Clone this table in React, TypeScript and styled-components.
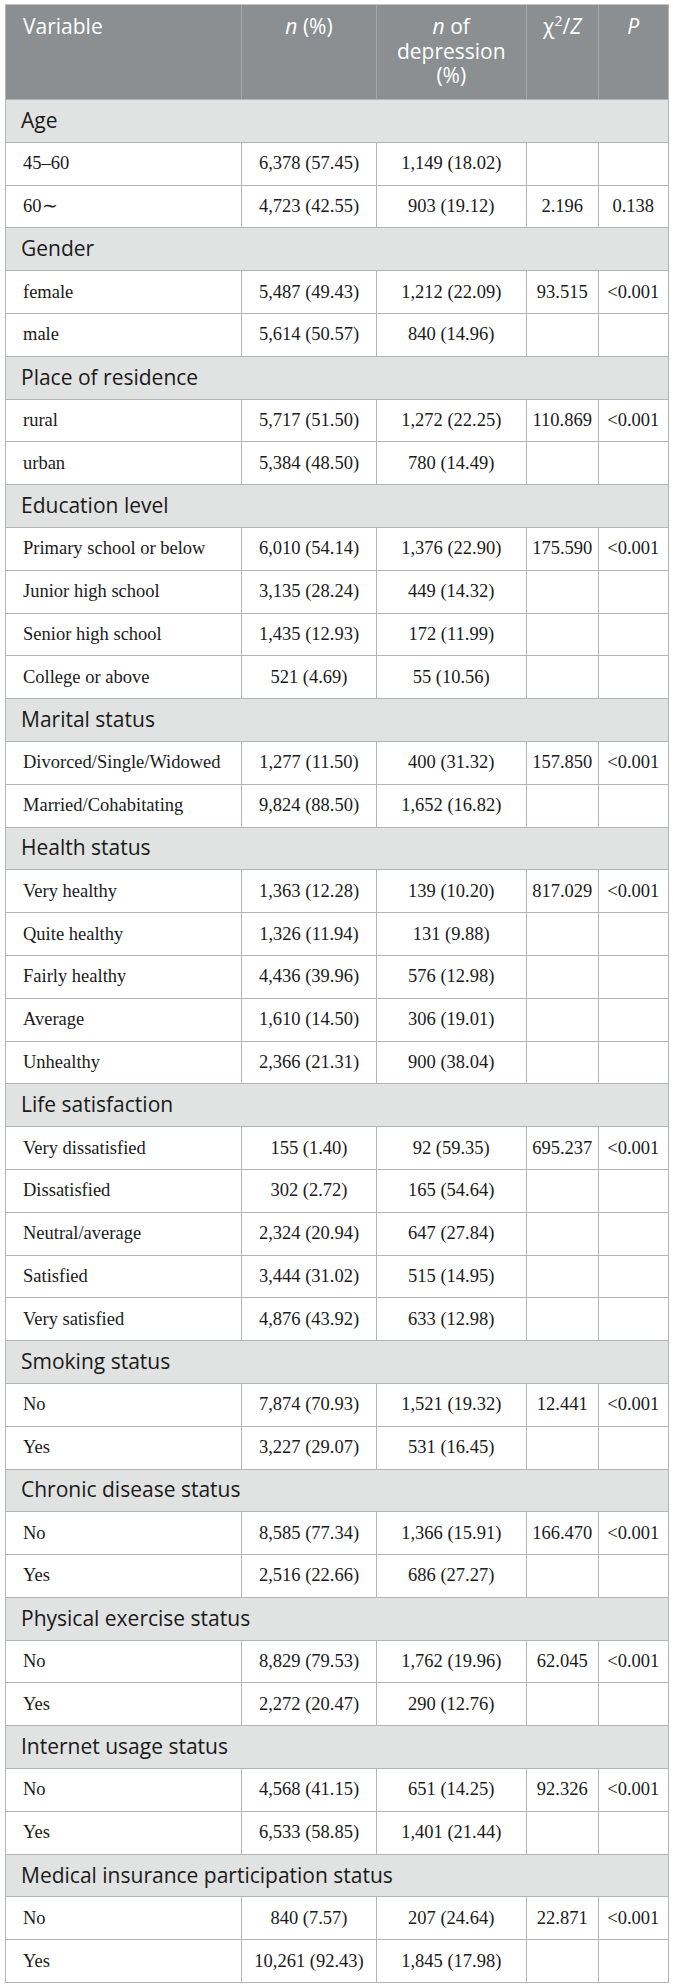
import React from "react";
import styled, { createGlobalStyle } from "styled-components";

const Global = createGlobalStyle`
  html, body { margin: 0; padding: 0; background: #ffffff; }
  body { padding: 4px 5px; }
`;

type Row = [string, string, string, string, string];
type Section = { title: string; rows: Row[] };

const sections: Section[] = [
  { title: "Age", rows: [
    ["45–60", "6,378 (57.45)", "1,149 (18.02)", "", ""],
    ["60∼", "4,723 (42.55)", "903 (19.12)", "2.196", "0.138"],
  ] },
  { title: "Gender", rows: [
    ["female", "5,487 (49.43)", "1,212 (22.09)", "93.515", "<0.001"],
    ["male", "5,614 (50.57)", "840 (14.96)", "", ""],
  ] },
  { title: "Place of residence", rows: [
    ["rural", "5,717 (51.50)", "1,272 (22.25)", "110.869", "<0.001"],
    ["urban", "5,384 (48.50)", "780 (14.49)", "", ""],
  ] },
  { title: "Education level", rows: [
    ["Primary school or below", "6,010 (54.14)", "1,376 (22.90)", "175.590", "<0.001"],
    ["Junior high school", "3,135 (28.24)", "449 (14.32)", "", ""],
    ["Senior high school", "1,435 (12.93)", "172 (11.99)", "", ""],
    ["College or above", "521 (4.69)", "55 (10.56)", "", ""],
  ] },
  { title: "Marital status", rows: [
    ["Divorced/Single/Widowed", "1,277 (11.50)", "400 (31.32)", "157.850", "<0.001"],
    ["Married/Cohabitating", "9,824 (88.50)", "1,652 (16.82)", "", ""],
  ] },
  { title: "Health status", rows: [
    ["Very healthy", "1,363 (12.28)", "139 (10.20)", "817.029", "<0.001"],
    ["Quite healthy", "1,326 (11.94)", "131 (9.88)", "", ""],
    ["Fairly healthy", "4,436 (39.96)", "576 (12.98)", "", ""],
    ["Average", "1,610 (14.50)", "306 (19.01)", "", ""],
    ["Unhealthy", "2,366 (21.31)", "900 (38.04)", "", ""],
  ] },
  { title: "Life satisfaction", rows: [
    ["Very dissatisfied", "155 (1.40)", "92 (59.35)", "695.237", "<0.001"],
    ["Dissatisfied", "302 (2.72)", "165 (54.64)", "", ""],
    ["Neutral/average", "2,324 (20.94)", "647 (27.84)", "", ""],
    ["Satisfied", "3,444 (31.02)", "515 (14.95)", "", ""],
    ["Very satisfied", "4,876 (43.92)", "633 (12.98)", "", ""],
  ] },
  { title: "Smoking status", rows: [
    ["No", "7,874 (70.93)", "1,521 (19.32)", "12.441", "<0.001"],
    ["Yes", "3,227 (29.07)", "531 (16.45)", "", ""],
  ] },
  { title: "Chronic disease status", rows: [
    ["No", "8,585 (77.34)", "1,366 (15.91)", "166.470", "<0.001"],
    ["Yes", "2,516 (22.66)", "686 (27.27)", "", ""],
  ] },
  { title: "Physical exercise status", rows: [
    ["No", "8,829 (79.53)", "1,762 (19.96)", "62.045", "<0.001"],
    ["Yes", "2,272 (20.47)", "290 (12.76)", "", ""],
  ] },
  { title: "Internet usage status", rows: [
    ["No", "4,568 (41.15)", "651 (14.25)", "92.326", "<0.001"],
    ["Yes", "6,533 (58.85)", "1,401 (21.44)", "", ""],
  ] },
  { title: "Medical insurance participation status", rows: [
    ["No", "840 (7.57)", "207 (24.64)", "22.871", "<0.001"],
    ["Yes", "10,261 (92.43)", "1,845 (17.98)", "", ""],
  ] },
];

const Table = styled.table`
  width: 662.5px;
  table-layout: fixed;
  border-collapse: collapse;
  border: 1px solid #b4b4b4;
`;

const HeadRow = styled.tr`
  height: 95px;
  background: #8b8f92;
`;

const HeadCell = styled.th<{ $align?: "left" | "center" }>`
  font-family: "Open Sans", "DejaVu Sans", sans-serif;
  font-weight: 400;
  font-size: 21px;
  line-height: 24.5px;
  color: #ffffff;
  text-align: ${(p) => p.$align ?? "center"};
  vertical-align: top;
  padding: 9px 6px 0 ${(p) => (p.$align === "left" ? "17px" : "6px")};
  border-left: 1px solid #a3a7a9;
  border-top: 1px solid #c4c4c4;
  border-bottom: 1px solid #b4b4b4;
  &:first-child { border-left: 1px solid #b4b4b4; }
  em { font-style: italic; }
  sup { font-size: 14px; line-height: 0; vertical-align: 8px; }
`;

const SectionRow = styled.tr`
  height: 42.8px;
  background: #e1e2e2;
`;

const SectionCell = styled.td`
  font-family: "Open Sans", "DejaVu Sans", sans-serif;
  font-size: 21px;
  color: #1a1a1a;
  padding: 0 0 2px 15px;
  vertical-align: middle;
  border-top: 1px solid #b4b4b4;
  border-bottom: 1px solid #b4b4b4;
  white-space: nowrap;
`;

const DataRow = styled.tr`
  height: 42.8px;
  background: #ffffff;
`;

const DataCell = styled.td<{ $align?: "left" | "center" }>`
  font-family: "Liberation Serif", "Times New Roman", serif;
  font-size: 18.5px;
  color: #1a1a1a;
  text-align: ${(p) => p.$align ?? "center"};
  vertical-align: middle;
  padding: 0 ${(p) => (p.$align === "left" ? "4px 0 17px" : "2px")};
  border: 1px solid #b4b4b4;
  white-space: nowrap;
`;

export default function App() {
  return (
    <>
      <Global />
      <Table>
        <colgroup>
          <col style={{ width: 236 }} />
          <col style={{ width: 135 }} />
          <col style={{ width: 149.5 }} />
          <col style={{ width: 72.5 }} />
          <col style={{ width: 69.5 }} />
        </colgroup>
        <thead>
          <HeadRow>
            <HeadCell $align="left">Variable</HeadCell>
            <HeadCell><em>n</em> (%)</HeadCell>
            <HeadCell><em>n</em> of depression (%)</HeadCell>
            <HeadCell>χ<sup>2</sup>/<em>Z</em></HeadCell>
            <HeadCell><em>P</em></HeadCell>
          </HeadRow>
        </thead>
        <tbody>
          {sections.map((s) => (
            <React.Fragment key={s.title}>
              <SectionRow>
                <SectionCell colSpan={5}>{s.title}</SectionCell>
              </SectionRow>
              {s.rows.map((r, i) => (
                <DataRow key={i}>
                  <DataCell $align="left">{r[0]}</DataCell>
                  <DataCell>{r[1]}</DataCell>
                  <DataCell>{r[2]}</DataCell>
                  <DataCell>{r[3]}</DataCell>
                  <DataCell>{r[4]}</DataCell>
                </DataRow>
              ))}
            </React.Fragment>
          ))}
        </tbody>
      </Table>
    </>
  );
}
